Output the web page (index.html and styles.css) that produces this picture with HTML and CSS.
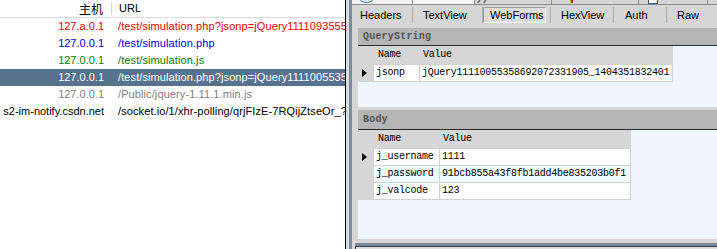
FILE: index.html
```html
<!DOCTYPE html>
<html lang="zh">
<head>
    <meta charset="UTF-8">
    <title>Fiddler - WebForms</title>
    <link rel="stylesheet" href="styles.css">
</head>
<body>
    <div class="app">
        <div class="sessions">
            <div class="sess-head">
                <div class="host">主机</div>
                <div class="url">URL</div>
            </div>
            <div class="sess-row red">
                <div class="host">127.a.0.1</div>
                <div class="url">/test/simulation.php?jsonp=jQuery1111093555</div>
            </div>
            <div class="sess-row blue">
                <div class="host">127.0.0.1</div>
                <div class="url">/test/simulation.php</div>
            </div>
            <div class="sess-row green">
                <div class="host">127.0.0.1</div>
                <div class="url">/test/simulation.js</div>
            </div>
            <div class="sess-row selected">
                <div class="host">127.0.0.1</div>
                <div class="url">/test/simulation.php?jsonp=jQuery1111005535</div>
            </div>
            <div class="sess-row grey">
                <div class="host">127.0.0.1</div>
                <div class="url">/Public/jquery-1.11.1.min.js</div>
            </div>
            <div class="sess-row">
                <div class="host">s2-im-notify.csdn.net</div>
                <div class="url">/socket.io/1/xhr-polling/qrjFIzE-7RQijZtseOr_?t</div>
            </div>
        </div>

        <div class="splitter"></div>

        <div class="inspector">
            <div class="top-tabs">
                <div class="tt tt1"><span class="ico ring"></span></div>
                <div class="tt tt2"></div>
                <div class="tt tt3"><span class="ico bolt"></span></div>
                <div class="tt tt4"><span class="ico pencil"></span></div>
                <div class="tt tt5"><span class="ico box"></span></div>
            </div>

            <div class="tabs">
                <div class="tab t-headers">Headers</div>
                <div class="tab t-text">TextView</div>
                <div class="tab t-forms"><div class="sel">WebForms</div></div>
                <div class="tab t-hex">HexView</div>
                <div class="tab t-auth">Auth</div>
                <div class="tab t-raw">Raw</div>
            </div>

            <div class="view">
                <div class="band">QueryString</div>
                <div class="pane pane-q">
                    <div class="grid grid-q">
                        <div class="g-head">
                            <div class="rh"></div>
                            <div class="gc c-name">Name</div>
                            <div class="gc c-value">Value</div>
                        </div>
                        <div class="g-row">
                            <div class="rh"><span class="arrow"></span></div>
                            <div class="cell c-name">jsonp</div>
                            <div class="cell c-value">jQuery11110055358692072331905_1404351832401</div>
                        </div>
                    </div>
                </div>

                <div class="hsplit"></div>

                <div class="band band-body">Body</div>
                <div class="pane pane-b">
                    <div class="grid grid-b">
                        <div class="g-head">
                            <div class="rh"></div>
                            <div class="gc c-name">Name</div>
                            <div class="gc c-value">Value</div>
                        </div>
                        <div class="g-row">
                            <div class="rh"><span class="arrow"></span></div>
                            <div class="cell c-name">j_username</div>
                            <div class="cell c-value">1111</div>
                        </div>
                        <div class="g-row alt">
                            <div class="rh"></div>
                            <div class="cell c-name">j_password</div>
                            <div class="cell c-value">91bcb855a43f8fb1add4be835203b0f1</div>
                        </div>
                        <div class="g-row">
                            <div class="rh"></div>
                            <div class="cell c-name">j_valcode</div>
                            <div class="cell c-value">123</div>
                        </div>
                    </div>
                </div>
            </div>

            <div class="lower">
                <div class="lower-in"></div>
            </div>
        </div>
    </div>
</body>
</html>
```

FILE: styles.css
```css
* {
    box-sizing: border-box;
}

body {
    margin: 0;
    width: 717px;
    height: 249px;
    overflow: hidden;
    background: #fff;
    font-family: "Liberation Sans", Arial, sans-serif;
    font-size: 11px;
    color: #000;
}

.app {
    display: flex;
    height: 249px;
}

/* session list */
.sessions {
    flex: none;
    width: 346px;
    border-right: 1px solid #000;
    background: #fff;
    overflow: hidden;
}

.sess-head {
    display: flex;
    align-items: center;
    height: 18px;
    border-bottom: 1px solid #dadada;
}

.sess-head .host {
    font-family: "Noto Sans CJK SC", sans-serif;
    font-size: 12px;
    padding-right: 8px;
    line-height: 14px;
}

.sess-head .url {
    height: 13px;
    line-height: 13px;
    border-left: 1px solid #d6d6d6;
    padding-left: 7px;
}

.sess-row {
    display: flex;
    height: 17px;
    line-height: 17px;
    white-space: nowrap;
}

.host {
    flex: none;
    width: 111px;
    padding-right: 7px;
    text-align: right;
}

.url {
    flex: 1;
    padding-left: 7px;
    overflow: hidden;
    white-space: nowrap;
    letter-spacing: 0.1px;
}

.red { color: #ff0000; }
.blue { color: #0000ff; }
.green { color: #008000; }
.grey { color: #808080; }

.selected {
    background: #56728d;
    color: #fff;
}

.splitter {
    flex: none;
    width: 6px;
    border-left: 3px solid #dcdcdc;
    background: #7a8c9c;
}

/* inspector */
.inspector {
    flex: 1;
    display: flex;
    flex-direction: column;
    background: #d6d6d6;
    overflow: hidden;
}

.top-tabs {
    flex: none;
    display: flex;
    height: 5px;
    border-bottom: 1px solid #8a8a8a;
    overflow: hidden;
}

.tt {
    flex: none;
    position: relative;
    border-right: 1px solid #8a8a8a;
}

.tt1 { width: 61px; background: #f2f2f2; }
.tt2 { width: 62px; background: #f7f7f7; }
.tt3 { width: 77px; }
.tt4 { width: 87px; }
.tt5 { width: 69px; }

.ico {
    position: absolute;
    top: -4px;
}

.ring {
    left: 8px;
    width: 13px;
    height: 7px;
    border: 1px solid #5a7fa8;
    border-radius: 50%;
    background: #d8e4f0;
}

.bolt {
    left: 4px;
    width: 8px;
    height: 7px;
    border-left: 2px solid #777;
    border-right: 2px solid #777;
    transform: skewX(-30deg);
}

.pencil {
    left: 18px;
    width: 3px;
    height: 7px;
    background: #d40000;
    border-left: 1px solid #e8b800;
}

.box {
    left: 9px;
    width: 10px;
    height: 8px;
    border: 1px solid #2f5a96;
    background: #fff;
}

.tabs {
    flex: none;
    display: flex;
    align-items: flex-start;
    height: 23px;
    padding-top: 2px;
}

.tab {
    flex: none;
    height: 16px;
    line-height: 16px;
    border-right: 1px solid #acacac;
    white-space: nowrap;
}

.t-headers { width: 61px; padding-left: 8px; }
.t-text { width: 70px; padding-left: 10px; }
.t-forms { width: 68px; }
.t-hex { width: 63px; padding-left: 10px; }
.t-auth { width: 53px; padding-left: 11px; }
.t-raw { flex: 1; padding-left: 10px; border-right: none; }

.sel {
    width: 63px;
    height: 16px;
    line-height: 14px;
    padding-left: 6px;
    border: 1px solid;
    border-color: #9c9c9c #f4f4f4 #f4f4f4 #9c9c9c;
    background: #dcdcdc;
}

.view {
    flex: none;
    height: 211px;
    margin-left: 6px;
    background: #eef5fd;
}

.band {
    height: 18px;
    line-height: 17px;
    padding-left: 5px;
    background: #b5b5b5;
    border-bottom: 1px solid #2c2c2c;
    font-family: "Liberation Mono", monospace;
    font-weight: bold;
    font-size: 10px;
    letter-spacing: 0.2px;
    color: #525252;
}

.band-body {
    height: 20px;
    line-height: 19px;
}

.pane-q { height: 61px; }
.pane-b { height: 109px; }

.hsplit {
    height: 3px;
    background: #d6d6d6;
}

/* grids */
.grid {
    background: #d6d6d6;
    font-family: "Liberation Mono", monospace;
    font-size: 10px;
    letter-spacing: -0.25px;
}

.grid-q { width: 315px; }
.grid-b { width: 273px; }

.g-head,
.g-row {
    display: flex;
}

.g-head {
    height: 18px;
    line-height: 18px;
}

.g-row {
    height: 17px;
}

.g-row:last-child {
    height: 18px;
}

.rh {
    flex: none;
    width: 16px;
    display: flex;
    align-items: center;
}

.arrow {
    margin-left: 4px;
    border-left: 5px solid #000;
    border-top: 4px solid transparent;
    border-bottom: 4px solid transparent;
}

.gc {
    flex: none;
    padding-left: 4px;
}

.grid-q .c-name { width: 46px; }
.grid-q .c-value { width: 253px; }
.grid-b .c-name { width: 66px; }
.grid-b .c-value { width: 191px; }

.g-head .c-value { padding-left: 3px; }

.cell {
    flex: none;
    background: #fff;
    border-top: 1px solid #d2d2d2;
    border-right: 1px solid #d2d2d2;
    padding-left: 2px;
    line-height: 16px;
    white-space: nowrap;
    overflow: hidden;
}

.g-row:last-child .cell {
    border-bottom: 1px solid #d2d2d2;
}

.alt .cell {
    background: #f0fbfb;
}

.lower {
    flex: none;
    height: 6px;
    margin-top: 4px;
    margin-left: 3px;
    border-top: 3px solid #768a9a;
    background: #d6d6d6;
}

.lower-in {
    height: 3px;
    border-top: 1px solid #3c3c3c;
    border-left: 1px solid #3c3c3c;
    background: #dedede;
}
```
